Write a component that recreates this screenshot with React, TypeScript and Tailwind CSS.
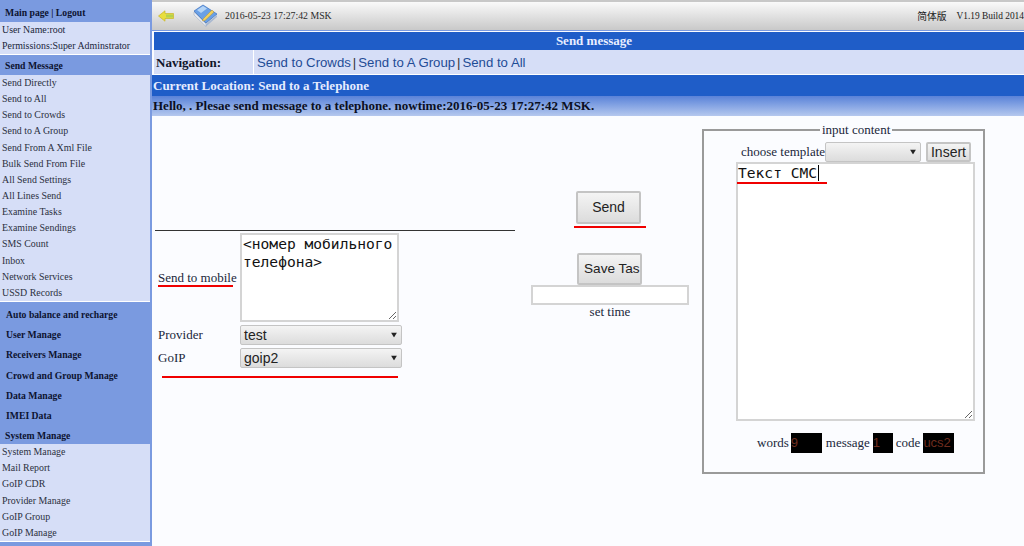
const sendItems = [
  "Send Directly",
  "Send to All",
  "Send to Crowds",
  "Send to A Group",
  "Send From A Xml File",
  "Bulk Send From File",
  "All Send Settings",
  "All Lines Send",
  "Examine Tasks",
  "Examine Sendings",
  "SMS Count",
  "Inbox",
  "Network Services",
  "USSD Records",
];
const systemItems = ["System Manage", "Mail Report", "GoIP CDR", "Provider Manage", "GoIP Group", "GoIP Manage"];
const groups = ["Auto balance and recharge", "User Manage", "Receivers Manage", "Crowd and Group Manage", "Data Manage", "IMEI Data"];

const controlClass =
  "font-['Liberation_Sans',sans-serif] text-[#222] border border-[#c4c4c4] rounded-[2px] bg-gradient-to-b from-[#f4f4f4] to-[#dcdcdc]";

const SideList = ({ items }: { items: string[] }) => (
  <ul className="mr-[2px] bg-[#d6def7] border-b border-white text-[9.9px]">
    {items.map((item) => (
      <li key={item} className="h-[16.15px] pl-[2px] leading-[16px] text-[#2b3040] whitespace-nowrap">
        {item}
      </li>
    ))}
  </ul>
);

const Select = ({ value, className }: { value: string; className: string }) => (
  <div className={`relative flex items-center pl-[3px] text-[14px] ${controlClass} ${className}`}>
    {value}
    <svg className="absolute right-[4px] top-1/2 -translate-y-1/2" width="6" height="5" viewBox="0 0 6 5">
      <path d="M0 0H6L3 5Z" fill="#222" />
    </svg>
  </div>
);

const RedLine = ({ className }: { className: string }) => (
  <div className={`absolute h-[2px] bg-[#f00000] ${className}`} />
);

const App = () => {
  return (
    <div className="relative flex h-[546px] w-[1024px] overflow-hidden bg-[#fbfcff] font-['Liberation_Serif',serif] text-[#20263a]">
      {/* Left menu */}
      <aside className="w-[152px] shrink-0 bg-[#7a9ae0] pt-[3px] text-[9.7px]">
        <div className="h-[19px] pl-[5px] font-bold leading-[20px] text-[#0d1330]">Main page | Logout</div>
        <div className="mr-[2px] h-[33px] border-b border-white bg-[#d6def7] pl-[2px] text-[9.9px] leading-[16px]">
          <div>User Name:root</div>
          <div className="whitespace-nowrap">Permissions:Super Adminstrator</div>
        </div>
        <div className="h-[20px] pl-[5px] font-bold leading-[22px] text-[#0d1330]">Send Message</div>
        <SideList items={sendItems} />
        <div className="pt-[3px]">
          {groups.map((g) => (
            <div key={g} className="h-[20.2px] pl-[6px] font-bold leading-[20px] text-[#0d1330] whitespace-nowrap">
              {g}
            </div>
          ))}
          <div className="h-[18px] pl-[5px] font-bold leading-[20px] text-[#0d1330]">System Manage</div>
        </div>
        <SideList items={systemItems} />
      </aside>

      <main className="flex min-w-0 flex-1 flex-col">
        {/* Top bar */}
        <header className="flex h-[31px] shrink-0 items-center border-t-2 border-b border-t-[#c8c8c8] border-b-[#7a9ae0] bg-gradient-to-b from-[#fafafa] to-[#c9c9c9] pl-[6px] text-[9.8px]">
          <svg width="16" height="12" viewBox="0 0 16 12" className="mr-[19px]">
            <path d="M0.5 6 7 0.8V3.5H15.5V8.5H7V11.2Z" fill="#e8de3e" stroke="#c9b52a" strokeWidth="0.7" />
            <path d="M8 4.5H15V7.5H8Z" fill="#b4d24e" />
          </svg>
          <svg width="25" height="24" viewBox="0 0 25 24" className="mr-[7px]">
            <path d="M1 7 10 1 24 10 13 19Z" fill="#6aa0e6" stroke="#3a70c0" strokeWidth="0.7" />
            <path d="M1 8 13 20 13 22.5 1 11Z" fill="#e6ebf4" stroke="#94a2b8" strokeWidth="0.5" />
            <path d="M13 20 24 11V13L13 22.5Z" fill="#a8b8d0" />
            <path d="M4 6 10 2 14 4.5 8 9Z" fill="#b4d4f6" />
            <path d="M10 15 19 6 21 8 12 16.5 9.5 17Z" fill="#f0d060" stroke="#b98c1c" strokeWidth="0.4" />
          </svg>
          <span className="text-[#2a2a2a]">2016-05-23 17:27:42 MSK</span>
          <span className="ml-auto font-['Noto_Sans_CJK_SC',sans-serif] text-[#222]">简体版</span>
          <span className="ml-[10px] whitespace-nowrap text-[9.4px] text-[#222]">V1.19 Build 2014</span>
        </header>

        {/* Title blocks */}
        <div className="ml-[2px] mt-[1px] flex h-[18px] shrink-0 items-center justify-center bg-[#1f5dc8] pl-[10px] text-[13px] font-bold text-[#e8eeff]">
          Send message
        </div>
        <div className="ml-[2px] flex h-[25px] shrink-0 items-center border-b border-white bg-[#d6def7]">
          <div className="w-[100px] border-r border-white pl-[2px] text-[13px] font-bold leading-[25px] text-[#10152a]">
            Navigation:
          </div>
          <div className="flex pl-[3px] font-['Liberation_Sans',sans-serif] text-[13.2px] leading-[25px] text-[#1f4c96]">
            <span>Send to Crowds</span>
            <span className="mx-[2px] text-[#333]">|</span>
            <span>Send to A Group</span>
            <span className="mx-[2px] text-[#333]">|</span>
            <span>Send to All</span>
          </div>
        </div>
        <div className="flex h-[21px] shrink-0 items-center bg-[#1f5dc8] pl-[1px] text-[13px] font-bold text-[#e6ecff]">
          Current Location: Send to a Telephone
        </div>
        <div className="flex h-[20px] shrink-0 items-center whitespace-nowrap bg-gradient-to-b from-[#5a82d8] to-[#b5c8ee] pl-[1px] text-[13px] font-bold text-[#0a0f22]">
          Hello, . Plesae send message to a telephone. nowtime:2016-05-23 17:27:42 MSK.
        </div>

        {/* Form */}
        <div className="flex min-h-0 flex-1 text-[13px]">
          <section className="relative ml-[3px] w-[360px] shrink-0 pt-[114px]">
            <div className="h-px bg-[#333]" />
            <div className="mt-[2px] flex items-end">
              <label className="w-[85px] pb-[36px] pl-[3px] leading-[16px]">Send to mobile</label>
              <textarea
                readOnly
                className="h-[89px] w-[159px] resize border-2 border-[#d4d4d4] bg-white px-[1px] py-0 font-['DejaVu_Sans_Mono',monospace] text-[14.6px] leading-[18px] text-[#111] outline-none"
                value={"<номер мобильного телефона>"}
              />
            </div>
            <div className="mt-[3px] flex items-center">
              <span className="w-[85px] pl-[3px]">Provider</span>
              <Select value="test" className="h-[20px] w-[162px]" />
            </div>
            <div className="mt-[3px] flex items-center">
              <span className="w-[85px] pl-[3px]">GoIP</span>
              <Select value="goip2" className="h-[20px] w-[162px]" />
            </div>
            <RedLine className="left-[3px] top-[169px] w-[75px]" />
            <RedLine className="left-[7px] top-[260px] w-[236px]" />
          </section>

          <section className="relative ml-[16px] flex w-[158px] shrink-0 flex-col items-center pt-[75px]">
            <button className={`mr-[3px] h-[33px] w-[65px] border-2 text-[14px] ${controlClass}`}>Send</button>
            <RedLine className="left-[43px] top-[110px] w-[72px]" />
            <button className={`mr-[1px] mt-[29px] h-[32px] w-[65px] overflow-hidden whitespace-nowrap border-2 pl-[5px] pr-0 text-left text-[13.6px] ${controlClass}`}>
              Save Task
            </button>
            <input className="h-[20px] w-[158px] border-2 border-[#d4d4d4] bg-white outline-none" />
            <div className="mt-[-1px] leading-[15px]">set time</div>
          </section>

          <fieldset className="ml-[13px] mt-[7px] h-[351px] w-[283px] shrink-0 border-2 border-[#9a9a9a]">
            <legend className="ml-[116px] px-[2px] text-[13px] leading-[14px]">input content</legend>
            <div className="relative ml-[33px] mt-[5px] flex h-[20px] w-[238px] items-center">
              <span className="ml-[4px] w-[84px] whitespace-nowrap">choose template</span>
              <Select value="" className="h-[20px] w-[96px]" />
              <button className={`ml-[5px] h-[20px] w-[45px] border-2 text-[14px] leading-[14px] ${controlClass}`}>Insert</button>
            </div>
            <div className="relative ml-[32px] h-[259px] w-[239px]">
              <textarea
                readOnly
                className="h-full w-full resize border-2 border-[#d4d4d4] bg-white px-0 py-0 font-['DejaVu_Sans_Mono',monospace] text-[14.6px] leading-[18px] text-[#111] outline-none"
                value="Текст СМС"
              />
              <div className="absolute left-[82px] top-[3px] h-[16px] w-px bg-black" />
              <RedLine className="left-[1px] top-[20px] w-[90px]" />
            </div>
            <div className="mt-[12px] flex h-[20px] items-center pl-[53px]">
              words
              <span className="ml-[2px] mr-[4px] h-[20px] w-[31px] bg-black font-['Liberation_Sans',sans-serif] text-[#6e2c1e] leading-[20px]">9</span>
              message
              <span className="mx-[3px] h-[20px] w-[20px] bg-black font-['Liberation_Sans',sans-serif] text-[#6e2c1e] leading-[20px]">1</span>
              code
              <span className="ml-[3px] h-[20px] w-[31px] bg-black font-['Liberation_Sans',sans-serif] text-[#6e2c1e] leading-[20px]">ucs2</span>
            </div>
          </fieldset>
        </div>
      </main>
    </div>
  );
};

export default App;
